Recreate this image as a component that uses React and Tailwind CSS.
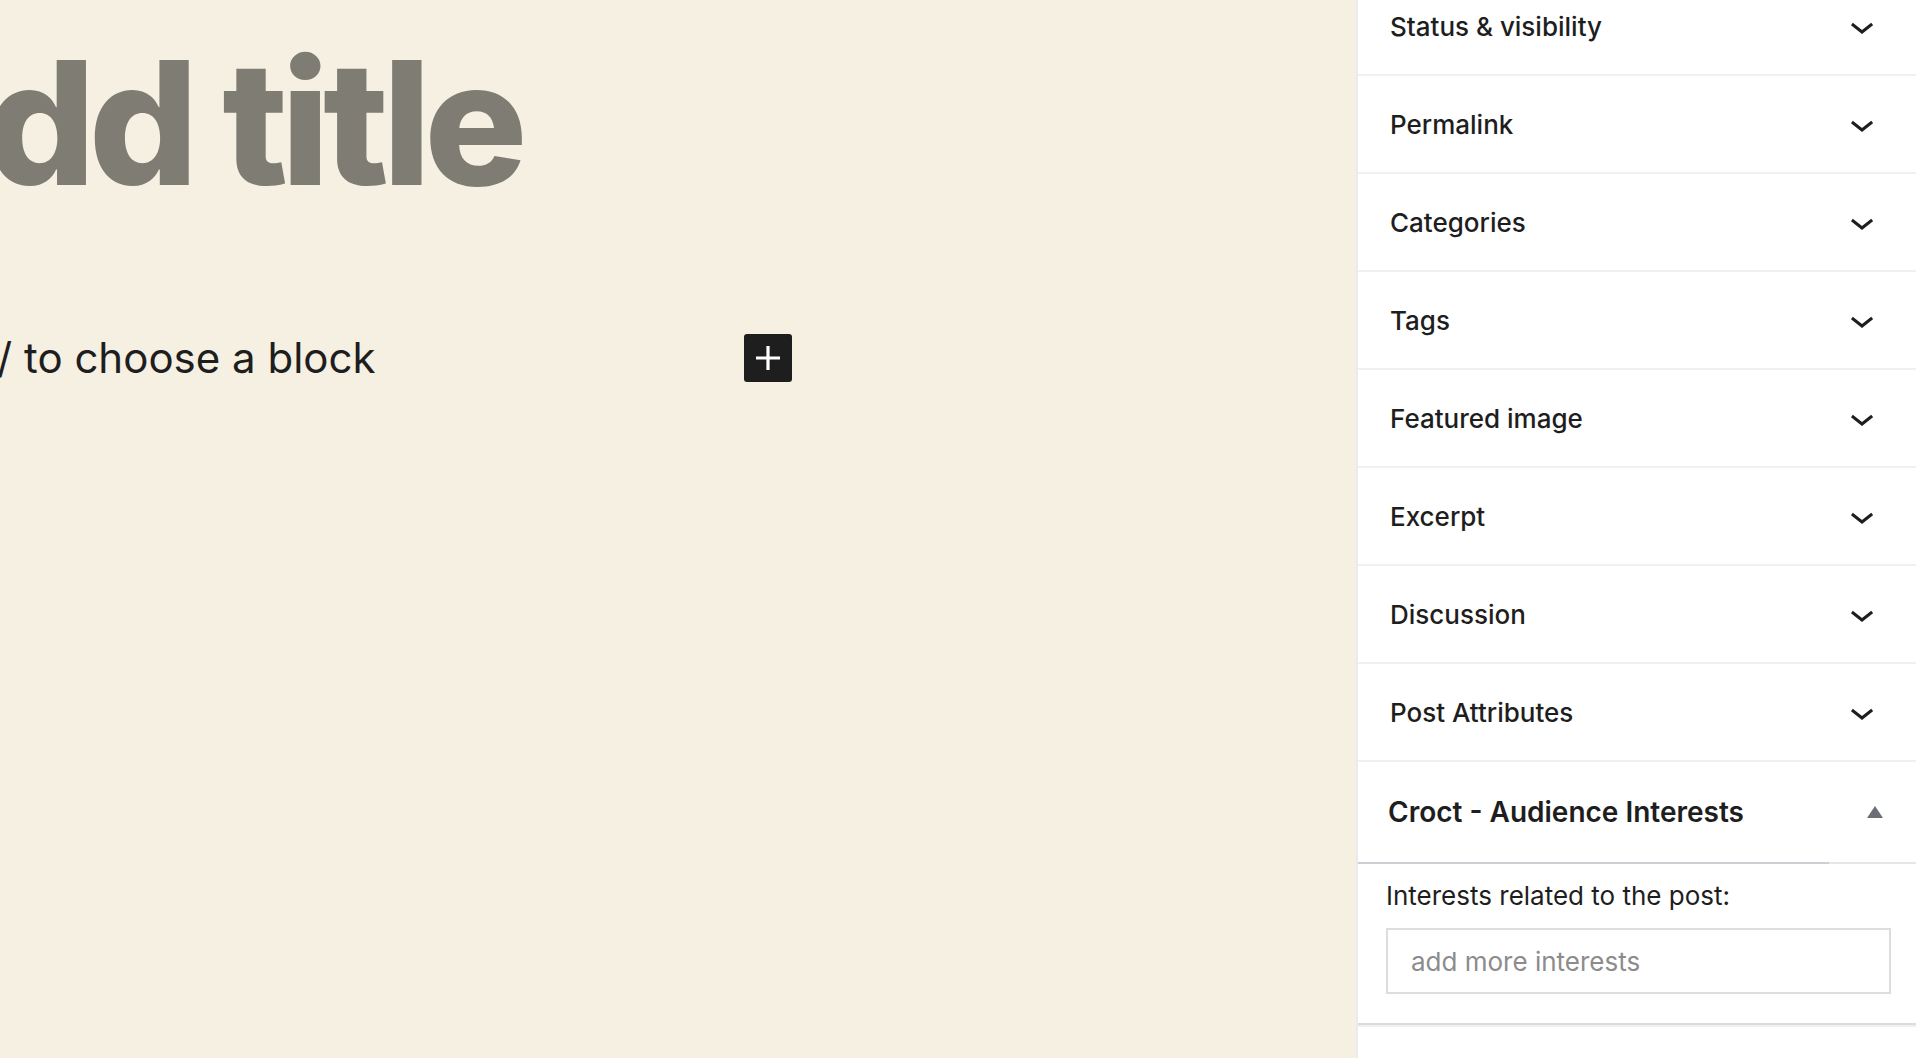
import React from "react";

const panels = [
  "Status & visibility",
  "Permalink",
  "Categories",
  "Tags",
  "Featured image",
  "Excerpt",
  "Discussion",
  "Post Attributes",
];

function ChevronDown() {
  return (
    <svg width="48" height="48" viewBox="0 0 24 24" fill="#1e1e1e">
      <path d="M17.5 11.6L12 16l-5.5-4.4.9-1.2L12 14l4.6-3.6 1 1.2z" />
    </svg>
  );
}

function PlusIcon() {
  return (
    <svg width="48" height="48" viewBox="0 0 24 24" fill="#ffffff">
      <path d="M18 11.2h-5.2V6h-1.6v5.2H6v1.6h5.2V18h1.6v-5.2H18z" />
    </svg>
  );
}

export default function App() {
  return (
    <div className="flex h-[1058px] w-[1916px] overflow-hidden font-['Inter',sans-serif] text-[#1e1e1e]">
      {/* Editor canvas */}
      <div className="flex-1 overflow-hidden bg-[#f5f0e1]">
        <div className="pt-[25px]">
          <h1 className="ml-[-134px] whitespace-nowrap text-[172px] font-extrabold leading-[1.138] tracking-[-0.04em] text-[#7f7c74]">
            Add title
          </h1>
          <div className="ml-[-113px] mt-[113px] flex items-center">
            <p className="w-[857px] whitespace-nowrap text-[42px] leading-[48px] text-[#1e1e1e]">
              Type / to choose a block
            </p>
            <button className="flex h-12 w-12 items-center justify-center rounded-[3px] bg-[#1e1e1e]">
              <PlusIcon />
            </button>
          </div>
        </div>
      </div>

      {/* Settings sidebar */}
      <aside className="w-[560px] shrink-0 border-l-2 border-[#ebebeb] bg-white">
        <div className="-mt-[22px]">
          {panels.map((label) => (
            <div
              key={label}
              className="flex h-[98px] items-center justify-between border-b-2 border-[#f0f0f0] pl-8 pr-[30px]"
            >
              <span className="text-[26px] font-medium">{label}</span>
              <ChevronDown />
            </div>
          ))}

          {/* Croct metabox */}
          <div>
            <div className="flex h-[100px] items-center justify-between pl-[30px] pr-[33px]">
              <h2 className="text-[28px] font-semibold">Croct - Audience Interests</h2>
              <span className="h-0 w-0 border-x-[8px] border-b-[12px] border-x-transparent border-b-[#6b6e72]" />
            </div>
            <div className="flex h-[2px]">
              <div className="w-[471px] bg-[#ccd0d4]" />
              <div className="flex-1 bg-[#e4e6e8]" />
            </div>
            <div className="pb-[29px] pl-[28px] pr-[25px] pt-[14px]">
              <p className="text-[26px] leading-[36px]">Interests related to the post:</p>
              <input
                type="text"
                placeholder="add more interests"
                className="mt-[14px] h-[66px] w-full border-2 border-[#dddddd] bg-white px-[23px] text-[26px] placeholder:text-[#8c8c8c] outline-none"
              />
            </div>
            <div className="h-[2px] bg-[#dcdcdc]" />
            <div className="h-[2px] bg-[#f0f0f0]" />
          </div>
        </div>
      </aside>
    </div>
  );
}
